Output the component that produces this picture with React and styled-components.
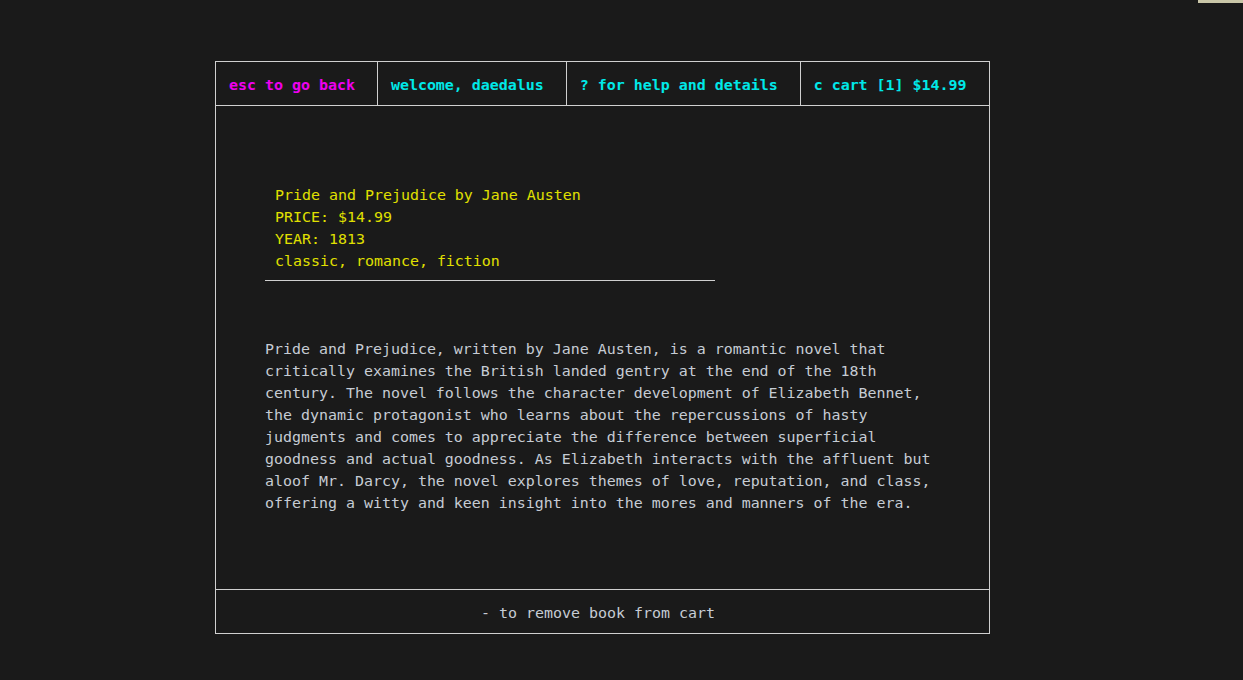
import React from 'react';
import styled, { createGlobalStyle } from 'styled-components';

const GlobalStyle = createGlobalStyle`
  html, body {
    margin: 0;
    padding: 0;
    background: #1a1a1a;
  }
  body {
    font-family: "DejaVu Sans Mono", "Liberation Mono", monospace;
    font-size: 14.95px;
  }
`;

const Screen = styled.div`
  min-height: 680px;
  padding: 61px 0 0 215px;
  box-sizing: border-box;
`;

const Corner = styled.div`
  position: fixed;
  top: 0;
  right: 0;
  width: 45px;
  height: 3px;
  background: #c9c6a8;
`;

const Frame = styled.div`
  width: 775px;
  height: 573px;
  box-sizing: border-box;
  border: 1px solid #d0d0d0;
  display: flex;
  flex-direction: column;
`;

const Header = styled.div`
  display: flex;
  height: 44px;
  box-sizing: border-box;
  border-bottom: 1px solid #d0d0d0;
`;

const Tab = styled.div`
  display: flex;
  align-items: center;
  padding: 3px 22px 0 13px;
  font-weight: bold;
  color: ${(p) => p.color};
  white-space: pre;
  flex: ${(p) => (p.grow ? 1 : 'none')};
  & + & {
    border-left: 1px solid #d0d0d0;
  }
`;

const Body = styled.div`
  flex: 1;
  padding: 78px 0 0 49px;
  line-height: 22px;
`;

const Info = styled.div`
  padding-left: 10px;
  color: #e0e000;
`;

const Rule = styled.div`
  margin-top: 8px;
  width: 450px;
  height: 1px;
  background: #d0d0d0;
`;

const Description = styled.p`
  margin: 57px 0 0;
  width: 75ch;
  color: #c6ccd4;
`;

const Footer = styled.div`
  height: 44px;
  box-sizing: border-box;
  border-top: 1px solid #d0d0d0;
  display: flex;
  align-items: center;
  justify-content: center;
  padding: 3px 9px 0 0;
  color: #c6ccd4;
  white-space: pre;
`;

const tabs = [
  { label: 'esc to go back', color: '#ee00ee' },
  { label: 'welcome, daedalus', color: '#00e8e8' },
  { label: '? for help and details', color: '#00e8e8' },
  { label: 'c cart [1] $14.99', color: '#00e8e8', grow: true },
];

const book = {
  title: 'Pride and Prejudice by Jane Austen',
  price: '$14.99',
  year: 1813,
  tags: ['classic', 'romance', 'fiction'],
  description:
    'Pride and Prejudice, written by Jane Austen, is a romantic novel that critically examines the British landed gentry at the end of the 18th century. The novel follows the character development of Elizabeth Bennet, the dynamic protagonist who learns about the repercussions of hasty judgments and comes to appreciate the difference between superficial goodness and actual goodness. As Elizabeth interacts with the affluent but aloof Mr. Darcy, the novel explores themes of love, reputation, and class, offering a witty and keen insight into the mores and manners of the era.',
};

function App() {
  return (
    <>
      <GlobalStyle />
      <Corner />
      <Screen>
        <Frame>
          <Header>
            {tabs.map((t) => (
              <Tab key={t.label} color={t.color} grow={t.grow ? 1 : 0}>
                {t.label}
              </Tab>
            ))}
          </Header>
          <Body>
            <Info>
              <div>{book.title}</div>
              <div>PRICE: {book.price}</div>
              <div>YEAR: {book.year}</div>
              <div>{book.tags.join(', ')}</div>
            </Info>
            <Rule />
            <Description>{book.description}</Description>
          </Body>
          <Footer>- to remove book from cart</Footer>
        </Frame>
      </Screen>
    </>
  );
}

export default App;
